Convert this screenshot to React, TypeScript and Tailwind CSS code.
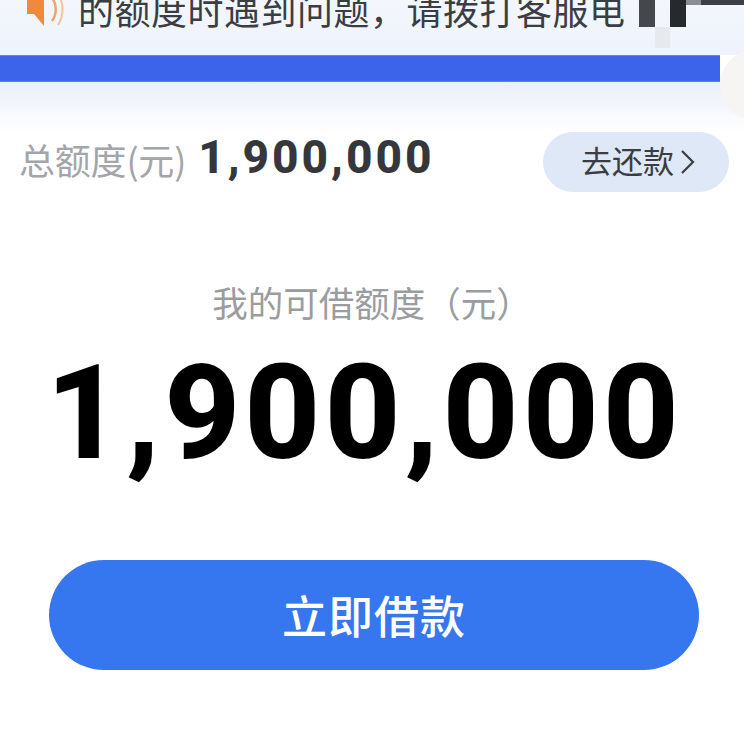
export default function App() {
  return (
    <div className="relative w-[744px] h-[744px] overflow-hidden bg-white flex flex-col font-['Noto_Sans_CJK_SC',sans-serif]">
      <div className="relative h-[55px] shrink-0 overflow-hidden bg-gradient-to-b from-[#f3f7fc] to-[#eef3fb]">
        <div className="flex items-center pl-[25px] -mt-[20px] h-[58px]">
          <svg width="42" height="46" viewBox="0 0 42 46" className="shrink-0">
            <path d="M2 14h7L19 6v34L9 28H2z" fill="#ef8a3c" />
            <path d="M27 12c5 6 5 16 0 23" stroke="#f0a56d" strokeWidth="2.5" fill="none" />
            <path d="M33 8c6 9 6 22 0 31" stroke="#f3c39d" strokeWidth="2" fill="none" />
          </svg>
          <span className="ml-[11px] text-[36px] leading-[58px] whitespace-nowrap text-[#3a3d42] tracking-[0.5px]">的额度时遇到问题，请拨打客服电</span>
        </div>
        <div className="absolute left-[639px] top-0 w-[16px] h-[27px] bg-[#44474c]" />
        <div className="absolute left-[655px] top-[27px] w-[15px] h-[21px] bg-[#e6e9ee]" />
        <div className="absolute left-[670px] top-0 w-[16px] h-[27px] bg-[#26292d]" />
        <div className="absolute left-[686px] top-0 w-[15px] h-[5px] bg-[#8a8d91]" />
        <div className="absolute left-[701px] top-0 w-[43px] h-[5px] bg-[#3c4046]" />
      </div>
      <div className="h-[27px] shrink-0 bg-[#3b64ea] border-y border-[#5f85e0] w-[720px]" />
      <div className="absolute left-[720px] top-[50px] w-[70px] h-[70px] rounded-full bg-[#f6f5f3]" />
      <div className="h-[50px] shrink-0 bg-gradient-to-b from-[#e9f0f9] to-white" />
      <div className="flex items-center justify-between pl-[19px] pr-[15px] h-[60px] shrink-0">
        <div className="flex items-center">
          <span className="text-[36px] text-[#a3a5a9] tracking-[-0.2px] leading-[60px] -mt-[7px]">总额度(元)</span>
          <span className="ml-[12px] text-[46px] font-extrabold tracking-[3px] text-[#35373b] font-['Roboto',sans-serif] leading-[50px] -mt-[10px]">1,900,000</span>
        </div>
        <div className="w-[186px] h-[60px] pl-[5px] rounded-[30px] bg-[#dfe8f6] flex items-center justify-center text-[31px] text-[#3a3d42]">
          <span className="-mt-[4px]">去还款</span>
          <svg width="16" height="26" viewBox="0 0 16 26" className="ml-[6px]"><path d="M2 2l11 11-11 11" stroke="#3a3d42" strokeWidth="2.2" fill="none" /></svg>
        </div>
      </div>
      <div className="mt-[86px] text-center text-[35.5px] leading-[48px] text-[#9b9c9f]">我的可借额度（元）</div>
      <div className="mt-[12px] ml-[46px] text-[132px] leading-[150px] tracking-[4px] font-extrabold text-black font-['Roboto',sans-serif] whitespace-nowrap">1,900,000</div>
      <div className="ml-[49px] w-[650px] mt-[72px] h-[110px] rounded-[55px] bg-[#3677ef] flex items-center justify-center text-white text-[45px] font-medium tracking-[1px]">立即借款</div>
    </div>
  );
}
